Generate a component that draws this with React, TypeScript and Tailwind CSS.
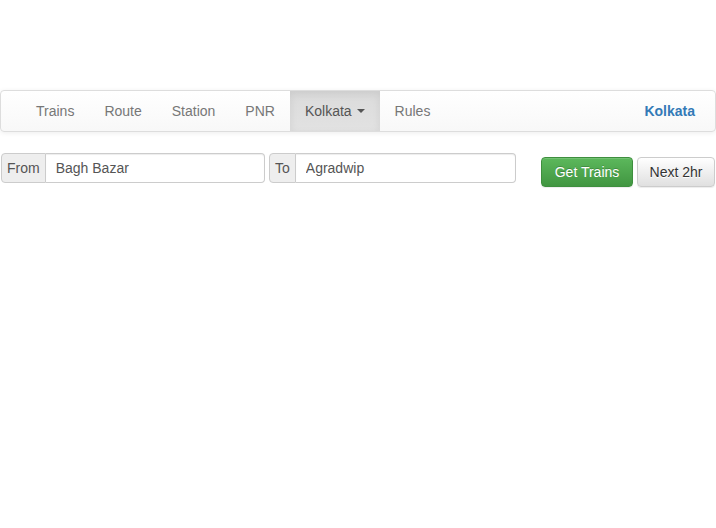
const navItems = ['Trains', 'Route', 'Station', 'PNR'];

function Caret() {
  return <span className="ml-[5px] inline-block h-0 w-0 border-x-[4px] border-t-[4px] border-x-transparent border-t-[#555] align-middle" />;
}

export default function App() {
  return (
    <div className="min-h-screen bg-white pt-[90px] text-[14px] font-['Liberation_Sans',Arial,sans-serif]">
      <nav className="flex h-[42px] items-stretch rounded-[4px] border border-[#ddd] bg-gradient-to-b from-white to-[#f8f8f8] shadow-[0_1px_5px_rgba(0,0,0,0.075)]">
        <ul className="flex items-stretch pl-[20px]">
          {navItems.map(item => (
            <li key={item} className="flex items-center px-[15px] text-[#777]">{item}</li>
          ))}
          <li className="flex items-center bg-gradient-to-b from-[#dbdbdb] to-[#e2e2e2] px-[15px] text-[#555] shadow-[inset_0_3px_9px_rgba(0,0,0,0.075)]">
            Kolkata
            <Caret />
          </li>
          <li className="flex items-center px-[15px] text-[#777]">Rules</li>
        </ul>
        <div className="ml-auto flex items-center pr-[20px] font-bold text-[#337ab7]">Kolkata</div>
      </nav>

      <div className="mt-[21px] flex items-start">
        <div className="ml-[1px] flex h-[30px] w-[264px]">
          <span className="flex items-center rounded-l-[4px] border border-[#ccc] bg-[#eee] px-[5px] text-[#555]">From</span>
          <input
            className="min-w-0 flex-1 rounded-r-[4px] border border-l-0 border-[#ccc] bg-white px-[10px] text-[#555] shadow-[inset_0_1px_1px_rgba(0,0,0,0.075)] outline-none"
            defaultValue="Bagh Bazar"
          />
        </div>
        <div className="ml-[4px] flex h-[30px] w-[247px]">
          <span className="flex items-center rounded-l-[4px] border border-[#ccc] bg-[#eee] px-[5px] text-[#555]">To</span>
          <input
            className="min-w-0 flex-1 rounded-r-[4px] border border-l-0 border-[#ccc] bg-white px-[10px] text-[#555] shadow-[inset_0_1px_1px_rgba(0,0,0,0.075)] outline-none"
            defaultValue="Agradwip"
          />
        </div>
        <div className="ml-[25px] mt-[4px] flex gap-[4px]">
          <button className="h-[30px] w-[92px] rounded-[4px] border border-[#3e8f3e] bg-gradient-to-b from-[#5cb85c] to-[#419641] text-white [text-shadow:0_-1px_0_rgba(0,0,0,0.2)] shadow-[inset_0_1px_0_rgba(255,255,255,0.15),0_1px_1px_rgba(0,0,0,0.075)]">
            Get Trains
          </button>
          <button className="h-[30px] w-[78px] rounded-[4px] border border-[#ccc] bg-gradient-to-b from-white to-[#e0e0e0] text-[#333] [text-shadow:0_1px_0_#fff] shadow-[inset_0_1px_0_rgba(255,255,255,0.15),0_1px_1px_rgba(0,0,0,0.075)]">
            Next 2hr
          </button>
        </div>
      </div>
    </div>
  );
}
